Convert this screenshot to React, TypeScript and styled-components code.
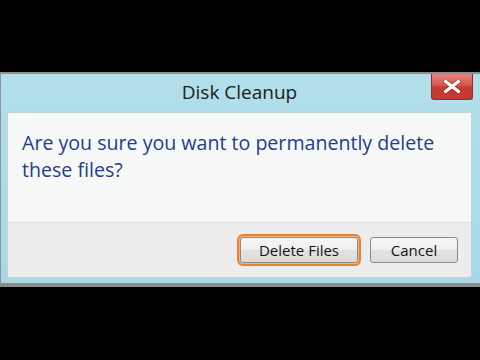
import React from "react";
import styled, { createGlobalStyle } from "styled-components";

const Global = createGlobalStyle`
  html, body {
    margin: 0;
    padding: 0;
    background: #000;
  }
  body {
    width: 480px;
    height: 360px;
    overflow: hidden;
    font-family: "Open Sans", "Noto Sans", "Liberation Sans", sans-serif;
  }
`;

const Screen = styled.div`
  width: 480px;
  height: 360px;
  display: flex;
  flex-direction: column;
  background: #000;
`;

const BlackBand = styled.div<{ $h: number }>`
  height: ${(p) => p.$h}px;
  flex: 0 0 auto;
  background: #000;
`;

const Window = styled.div`
  box-sizing: border-box;
  height: 215px;
  flex: 0 0 auto;
  border-top: 2px solid #8b9193;
  border-left: 1px solid #8d9597;
  border-bottom: 4px solid #8a8c8d;
  background: linear-gradient(180deg, #b2dfea 0%, #a9dbe8 60%, #a6d8e6 100%);
  padding: 0 8px 5px 6px;
  display: flex;
  flex-direction: column;
`;

const TitleBar = styled.div`
  height: 38px;
  flex: 0 0 auto;
  display: grid;
  grid-template-columns: 1fr auto 1fr;
  align-items: start;
`;

const Title = styled.div`
  grid-column: 2;
  line-height: 36px;
  font-size: 19px;
  color: #1c1c1c;
`;

const CloseButton = styled.div`
  grid-column: 3;
  justify-self: end;
  margin-right: -1px;
  box-sizing: border-box;
  width: 42px;
  height: 26px;
  border: 1px solid #8e2e27;
  border-top: none;
  border-radius: 0 0 3px 3px;
  background: linear-gradient(180deg, #e58679 0%, #d6574c 45%, #c7392f 55%, #c23a30 100%);
  display: flex;
  align-items: center;
  justify-content: center;
`;

const Content = styled.div`
  box-sizing: border-box;
  height: 166px;
  border: 1px solid #c3d3d8;
  background: #f7f8f8;
  display: flex;
  flex-direction: column;
`;

const Message = styled.div`
  flex: 1 1 auto;
  padding: 16px 0 0 14px;
  font-size: 19.6px;
  line-height: 27px;
  color: #253d8c;
`;

const Footer = styled.div`
  flex: 0 0 auto;
  box-sizing: border-box;
  height: 55px;
  border-top: 1px solid #e0e2e2;
  background: #ededed;
  display: flex;
  align-items: center;
  justify-content: flex-end;
  gap: 12px;
  padding: 0 13px 1px 0;
`;

const Button = styled.div<{ $w: number; $focused?: boolean }>`
  box-sizing: border-box;
  width: ${(p) => p.$w}px;
  height: 26px;
  border: 1px solid #8a8a8a;
  border-radius: 3px;
  background: linear-gradient(180deg, #f6f6f6 0%, #eeeeee 50%, #e2e2e2 52%, #dcdcdc 100%);
  display: flex;
  align-items: center;
  justify-content: center;
  font-size: 15px;
  color: #141414;
  box-shadow: ${(p) =>
    p.$focused ? "0 0 0 1px #f4b47c, 0 0 0 3px #e8822e" : "none"};
`;

export default function App() {
  return (
    <>
      <Global />
      <Screen>
        <BlackBand $h={72} />
        <Window>
          <TitleBar>
            <Title>Disk Cleanup</Title>
            <CloseButton>
              <svg width="18" height="13" viewBox="0 0 18 13">
                <path
                  d="M2.5 1.5 L15.5 11.5 M15.5 1.5 L2.5 11.5"
                  stroke="#7b2a22"
                  strokeWidth="5"
                  strokeLinecap="round"
                  opacity="0.45"
                />
                <path
                  d="M2.5 1.5 L15.5 11.5 M15.5 1.5 L2.5 11.5"
                  stroke="#ffffff"
                  strokeWidth="3.2"
                  strokeLinecap="round"
                />
              </svg>
            </CloseButton>
          </TitleBar>
          <Content>
            <Message>
              Are you sure you want to permanently delete
              <br />
              these files?
            </Message>
            <Footer>
              <Button $w={118} $focused>
                Delete Files
              </Button>
              <Button $w={88}>Cancel</Button>
            </Footer>
          </Content>
        </Window>
      </Screen>
    </>
  );
}
